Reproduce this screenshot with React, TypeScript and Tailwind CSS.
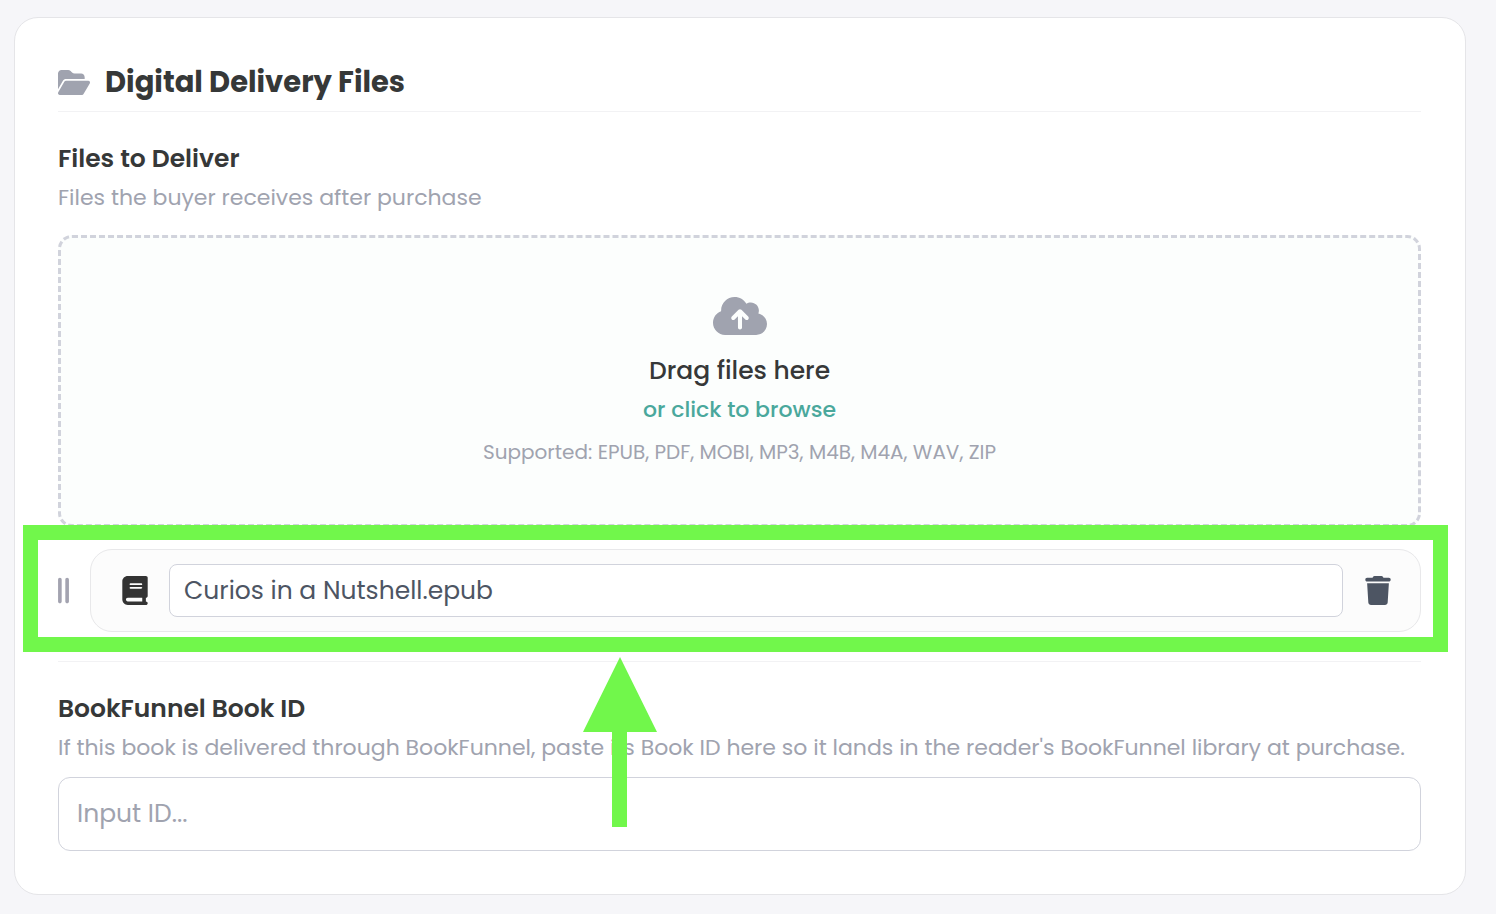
import React, { useState } from 'react';
import {
  FaBook,
  FaCloudArrowUp,
  FaFolderOpen,
  FaGripLinesVertical,
  FaTrash,
} from 'react-icons/fa6';

const FORMATS = ['EPUB', 'PDF', 'MOBI', 'MP3', 'M4B', 'M4A', 'WAV', 'ZIP'];

function DropZone() {
  return (
    <button
      type="button"
      className="w-full flex flex-col items-center rounded-[14px] border-3 border-dashed border-[#d1d3dc] bg-[#fcfefd] py-14"
    >
      <FaCloudArrowUp className="w-[54px] h-11 text-[#a0a3af]" />
      <span className="mt-[15px] text-[25px] leading-9 font-medium text-[#363838]">Drag files here</span>
      <span className="mt-[3px] text-[22px] leading-9 font-medium text-[#4aa89c]">or click to browse</span>
      <span className="mt-2 text-[20px] leading-8 text-[#a0a3af]">
        Supported: {FORMATS.join(', ')}
      </span>
    </button>
  );
}

function FileRow() {
  const [name, setName] = useState('Curios in a Nutshell.epub');

  return (
    <div className="relative mt-[22px]">
      <div className="flex items-center gap-[21px]">
        <FaGripLinesVertical className="w-[11px] h-[29px] shrink-0 text-[#a3a3b0]" />
        <div className="flex flex-1 min-w-0 items-center rounded-[22px] border border-[#e8e8ea] bg-[#fcfcfc] py-[14px] pl-[31px] pr-[29px]">
          <FaBook className="w-[26px] h-[29px] shrink-0 text-[#333333]" />
          <input
            type="text"
            aria-label="File name"
            value={name}
            onChange={(e) => setName(e.target.value)}
            className="ml-[21px] h-[53px] min-w-0 flex-1 rounded-lg border border-[#d1d3dc] bg-white px-[14px] text-[25px] text-[#4d5563] outline-none"
          />
          <button type="button" aria-label="Delete file" className="ml-[22px] shrink-0 text-[#4d5563]">
            <FaTrash className="w-[26px] h-[29px]" />
          </button>
        </div>
      </div>

      <div className="pointer-events-none absolute -top-6 -bottom-5 -left-[35px] -right-[27px] z-10 border-[15px] border-[#71f74b]" />
      <svg
        className="pointer-events-none absolute top-[108px] left-[525px] z-10 w-[74px] h-[170px] text-[#71f74b]"
        viewBox="0 0 74 170"
        fill="currentColor"
      >
        <path d="M37 0L74 75H44V170H29V75H0z" />
      </svg>
    </div>
  );
}

export default function App() {
  const [bookId, setBookId] = useState('');

  return (
    <main className="min-h-screen bg-[#f6f6f9] pt-[17px] pb-[19px] pl-[14px] pr-[30px] font-['Poppins','Inter',sans-serif]">
      <section className="rounded-3xl border border-[#e5e5e8] bg-white pl-[43px] pr-[44px] py-[43px]">
        <h1 className="flex items-center gap-[15px] border-b border-[#f2f2f4] pb-[7px] text-[29px] leading-[43px] font-bold text-[#363838]">
          <FaFolderOpen className="w-8 h-[29px] shrink-0 text-[#a0a3af]" />
          Digital Delivery Files
        </h1>

        <h2 className="mt-[29px] text-[25px] leading-9 font-semibold text-[#363838]">Files to Deliver</h2>
        <p className="mt-[3px] mb-[19px] text-[22px] leading-9 text-[#a0a3af]">
          Files the buyer receives after purchase
        </p>
        <DropZone />
        <FileRow />

        <div className="mt-[29px] border-t border-[#f2f2f4] pt-[29px]">
          <label htmlFor="book-id" className="block text-[25px] leading-9 font-semibold text-[#363838]">
            BookFunnel Book ID
          </label>
          <p className="mt-[3px] mb-[11px] text-[22px] leading-9 text-[#a0a3af]">
            If this book is delivered through BookFunnel, paste its Book ID here so it lands in the reader's BookFunnel library at purchase.
          </p>
          <input
            id="book-id"
            type="text"
            value={bookId}
            onChange={(e) => setBookId(e.target.value)}
            placeholder="Input ID..."
            className="block h-[74px] w-full rounded-xl border border-[#d1d3dc] bg-white px-[18px] text-[25px] text-[#4d5563] placeholder:text-[#a0a3af] outline-none"
          />
        </div>
      </section>
    </main>
  );
}
